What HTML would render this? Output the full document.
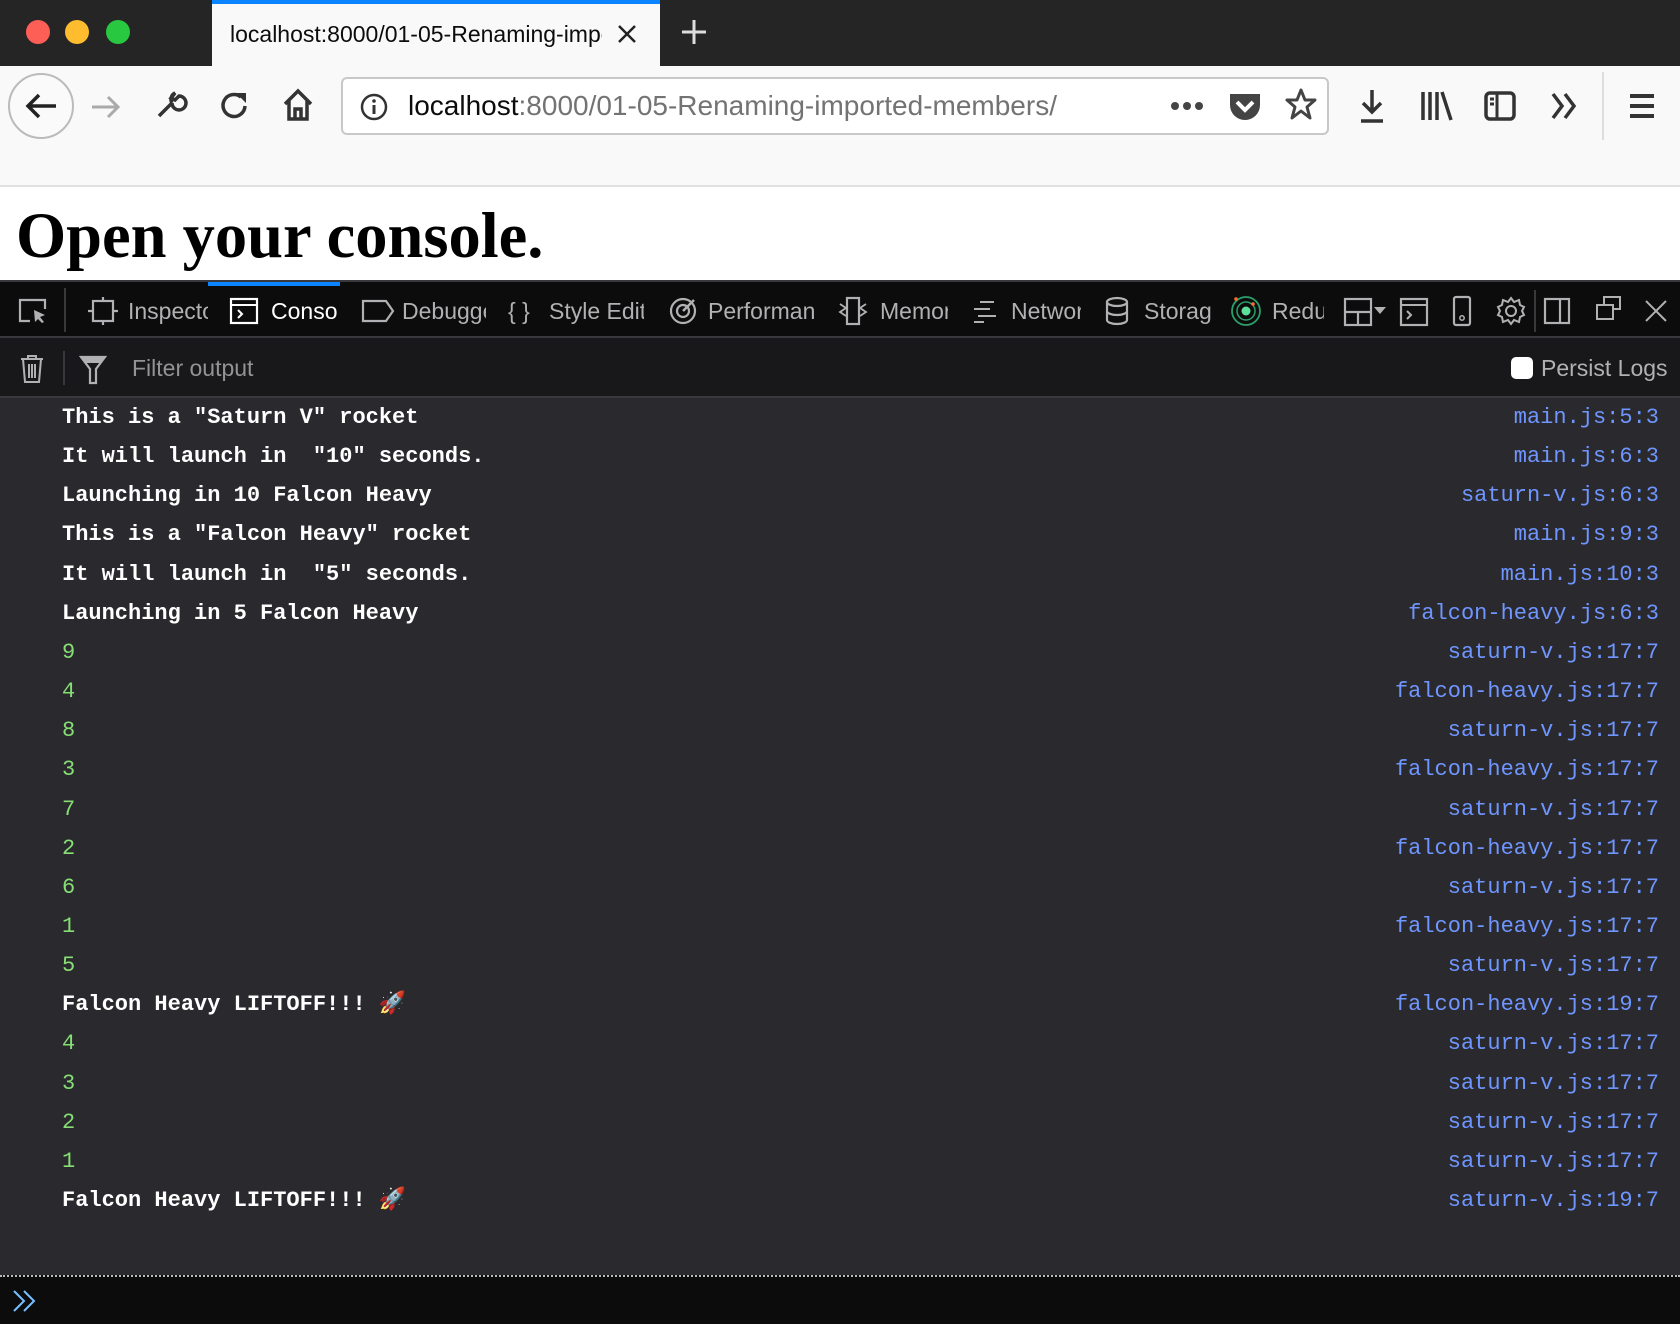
<!DOCTYPE html>
<html><head><meta charset="utf-8"><style>
*{margin:0;padding:0;box-sizing:border-box}
body{width:1680px;height:1324px;overflow:hidden;background:#fff;font-family:"Liberation Sans",sans-serif;position:relative}
.a{position:absolute}
.tabbar{left:0;top:0;width:1680px;height:66px;background:#252525}
.dot{width:24px;height:24px;border-radius:50%;top:20px}
.tab{left:212px;top:0;width:448px;height:66px;background:#f9f9f9;border-top:4px solid #0a84ff}
.toolbar{left:0;top:66px;width:1680px;height:121px;background:#f9f9f9;border-bottom:2px solid #e0e0e0}
.url{left:341px;top:77px;width:988px;height:58px;background:#fff;border:2px solid #c8c8c8;border-radius:6px}
.dt{left:0;top:280px;width:1680px;height:58px;background:#0c0c0d;border-top:2px solid #38383d;border-bottom:2px solid #38383d}
.tt{top:296px;font-size:23px;color:#b1b1b3;overflow:hidden;white-space:nowrap;height:30px;line-height:30px}
.fb{left:0;top:338px;width:1680px;height:60px;background:#18181a;border-bottom:2px solid #38383d}
.con{left:0;top:398px;width:1680px;height:877px;background:#2a2a2e}
.row{position:absolute;left:0;width:1680px;height:39px;line-height:39px;font-family:"Liberation Mono",monospace;font-size:22px;color:#fff}
.row .m{position:absolute;left:62px;white-space:pre;font-weight:bold}
.row .l{position:absolute;right:21px;color:#6f95ff}
.g{color:#86de74!important;font-weight:normal!important}
.inp{left:0;top:1275px;width:1680px;height:49px;background:#0c0c0d;border-top:2px dotted #bbb}
svg{position:absolute;overflow:visible}
</style></head><body>
<div class="a tabbar"></div>
<div class="a dot" style="left:26px;background:#fd5f57"></div>
<div class="a dot" style="left:65px;background:#febc2e"></div>
<div class="a dot" style="left:106px;background:#28c840"></div>
<div class="a tab"><div class="a" style="left:18px;top:17px;font-size:23px;color:#0c0c0d;white-space:nowrap;width:372px;overflow:hidden">localhost:8000/01-05-Renaming-imported</div></div>
<svg style="left:617px;top:24px" width="20" height="20"><path d="M2 2L18 18M18 2L2 18" stroke="#222" stroke-width="2.5"/></svg>
<svg style="left:680px;top:18px" width="28" height="28"><path d="M14 2V26M2 14H26" stroke="#ddd" stroke-width="3"/></svg>
<div class="a toolbar"></div>
<div class="a" style="left:8px;top:73px;width:66px;height:66px;border-radius:50%;border:2px solid #bbb;background:#fafafa"></div>
<svg style="left:24px;top:92px" width="34" height="28"><path d="M32 14H4M15 3L4 14L15 25" stroke="#222" stroke-width="3.5" fill="none"/></svg>
<svg style="left:90px;top:94px" width="32" height="26"><path d="M2 13H28M18 3L28 13L18 23" stroke="#aaa" stroke-width="3" fill="none"/></svg>
<svg style="left:155px;top:90px" width="30" height="30"><path d="M4 26L17 13M17 13A7 7 0 1 0 24 6L20 10L16 8L20 3A7 7 0 0 0 17 13" stroke="#333" stroke-width="3.5" fill="none"/></svg>
<svg style="left:219px;top:90px" width="32" height="32"><path d="M26 16A11 11 0 1 1 22 7" stroke="#333" stroke-width="3.5" fill="none"/><path d="M17 3H27V13Z" fill="#333"/></svg>
<svg style="left:282px;top:88px" width="32" height="34"><path d="M3 16L16 3L29 16M7 13V31H25V13M13 31V21H19V31" stroke="#333" stroke-width="3.5" fill="none"/></svg>
<div class="a url"></div>
<svg style="left:360px;top:93px" width="28" height="28"><circle cx="14" cy="14" r="12" stroke="#333" stroke-width="2.5" fill="none"/><path d="M14 12V21" stroke="#333" stroke-width="3"/><circle cx="14" cy="8" r="1.8" fill="#333"/></svg>
<div class="a" style="left:408px;top:90px;font-size:28px;color:#0c0c0d;white-space:nowrap">localhost<span style="color:#737373">:8000/01-05-Renaming-imported-members/</span></div>
<svg style="left:1170px;top:100px" width="36" height="12"><circle cx="5" cy="6" r="4" fill="#444"/><circle cx="17" cy="6" r="4" fill="#444"/><circle cx="29" cy="6" r="4" fill="#444"/></svg>
<svg style="left:1228px;top:91px" width="34" height="32"><path d="M2 3H32V14A15 15 0 0 1 2 14Z" fill="#444"/><path d="M9 11L17 19L25 11" stroke="#fff" stroke-width="4" fill="none"/></svg>
<svg style="left:1285px;top:88px" width="32" height="34"><path d="M16 2L20 12H30L22 19L25 30L16 23L7 30L10 19L2 12H12Z" stroke="#444" stroke-width="3" fill="none" stroke-linejoin="round"/></svg>
<svg style="left:1358px;top:88px" width="28" height="36"><path d="M14 2V24M5 15L14 24L23 15M3 33H25" stroke="#333" stroke-width="3.5" fill="none"/></svg>
<svg style="left:1420px;top:90px" width="34" height="32"><path d="M3 2V30M10 2V30M17 2V30M22 2L31 30" stroke="#333" stroke-width="3.5"/></svg>
<svg style="left:1484px;top:91px" width="32" height="30"><rect x="2" y="2" width="28" height="26" rx="4" stroke="#333" stroke-width="3.5" fill="none"/><path d="M13 2V28M6 8H10M6 13H10" stroke="#333" stroke-width="3"/></svg>
<svg style="left:1550px;top:92px" width="30" height="28"><path d="M3 2L12 14L3 26M15 2L24 14L15 26" stroke="#333" stroke-width="3.5" fill="none"/></svg>
<div class="a" style="left:1602px;top:72px;width:2px;height:68px;background:#ddd"></div>
<svg style="left:1628px;top:93px" width="28" height="26"><path d="M2 3H26M2 13H26M2 23H26" stroke="#333" stroke-width="4"/></svg>
<div class="a" style="left:16px;top:199px;font-family:'Liberation Serif',serif;font-weight:bold;font-size:64.5px;color:#000;white-space:nowrap">Open your console.</div>
<div class="a dt"></div>
<div class="a" style="left:208px;top:282px;width:132px;height:4px;background:#0a84ff"></div>
<svg style="left:18px;top:298px" width="30" height="26"><path d="M12 23H2V2H27V11" stroke="#b1b1b3" stroke-width="2.2" fill="none"/><path d="M16 12L27 17L22 19L26 24L24 25L20 21L17 24Z" fill="#b1b1b3"/></svg>
<div class="a" style="left:64px;top:288px;width:2px;height:44px;background:#38383d"></div>
<svg style="left:88px;top:297px" width="30" height="28"><rect x="5" y="4" width="20" height="20" stroke="#b1b1b3" stroke-width="2.2" fill="none"/><path d="M15 0V4M15 24V28M0 14H5M25 14H30" stroke="#b1b1b3" stroke-width="2.2"/></svg>
<div class="a tt" style="left:128px;width:80px">Inspector</div>
<svg style="left:230px;top:298px" width="28" height="26"><rect x="1" y="1" width="26" height="24" stroke="#fff" stroke-width="2.2" fill="none"/><path d="M1 7H27M8 12L12 16L8 20" stroke="#fff" stroke-width="2" fill="none"/></svg>
<div class="a tt" style="left:271px;width:68px;color:#fff">Console</div>
<svg style="left:362px;top:300px" width="32" height="22"><path d="M1 1H24L31 11L24 21H1Z" stroke="#b1b1b3" stroke-width="2.2" fill="none"/></svg>
<div class="a tt" style="left:402px;width:84px">Debugger</div>
<div class="a tt" style="left:508px;width:32px">{ }</div>
<div class="a tt" style="left:549px;width:95px">Style Editor</div>
<svg style="left:668px;top:296px" width="30" height="30"><circle cx="15" cy="15" r="12" stroke="#b1b1b3" stroke-width="2.2" fill="none"/><circle cx="15" cy="15" r="6" stroke="#b1b1b3" stroke-width="2.2" fill="none"/><path d="M15 15L26 4" stroke="#b1b1b3" stroke-width="2.5"/></svg>
<div class="a tt" style="left:708px;width:108px">Performance</div>
<svg style="left:838px;top:296px" width="30" height="30"><rect x="9" y="2" width="12" height="26" stroke="#b1b1b3" stroke-width="2.2" fill="none"/><path d="M2 8L8 12L2 16L8 20M28 8L22 12L28 16L22 20" stroke="#b1b1b3" stroke-width="1.8" fill="none"/></svg>
<div class="a tt" style="left:880px;width:68px">Memory</div>
<svg style="left:972px;top:300px" width="26" height="24"><path d="M8 2H22M2 9H18M6 16H24M2 22H12" stroke="#b1b1b3" stroke-width="2"/></svg>
<div class="a tt" style="left:1011px;width:70px">Network</div>
<svg style="left:1104px;top:296px" width="26" height="30"><ellipse cx="13" cy="6" rx="10" ry="4" stroke="#b1b1b3" stroke-width="2.2" fill="none"/><path d="M3 6V24A10 4 0 0 0 23 24V6M3 15A10 4 0 0 0 23 15" stroke="#b1b1b3" stroke-width="2.2" fill="none"/></svg>
<div class="a tt" style="left:1144px;width:68px">Storage</div>
<svg style="left:1230px;top:295px" width="32" height="32"><circle cx="16" cy="16" r="14" stroke="#2aa06a" stroke-width="1.8" fill="none"/><circle cx="16" cy="16" r="9" stroke="#2aa06a" stroke-width="1.5" fill="none"/><circle cx="16" cy="16" r="4.5" fill="#5ce09a"/><circle cx="6" cy="4" r="1.8" fill="#ff6a2a"/><circle cx="23" cy="9" r="1.8" fill="#ff6a2a"/></svg>
<div class="a tt" style="left:1272px;width:52px">Redux</div>
<svg style="left:1344px;top:298px" width="46" height="28"><rect x="1" y="1" width="26" height="26" stroke="#b1b1b3" stroke-width="2.2" fill="none"/><path d="M1 14H27M14 14V27" stroke="#b1b1b3" stroke-width="2.2"/><path d="M30 9H42L36 16Z" fill="#b1b1b3"/></svg>
<svg style="left:1400px;top:298px" width="28" height="28"><rect x="1" y="1" width="26" height="26" stroke="#b1b1b3" stroke-width="2.2" fill="none"/><path d="M1 7H27M7 13L11 17L7 21" stroke="#b1b1b3" stroke-width="2" fill="none"/></svg>
<svg style="left:1453px;top:296px" width="18" height="30"><rect x="1" y="1" width="16" height="28" rx="2" stroke="#b1b1b3" stroke-width="2.2" fill="none"/><circle cx="9" cy="22" r="2.2" stroke="#b1b1b3" stroke-width="1.5" fill="none"/></svg>
<svg style="left:1496px;top:296px" width="30" height="30"><circle cx="15" cy="15" r="5" stroke="#b1b1b3" stroke-width="2" fill="none"/><path d="M15 2L18 6L23 4L24 9L28 11L26 15L28 19L24 21L23 26L18 24L15 28L12 24L7 26L6 21L2 19L4 15L2 11L6 9L7 4L12 6Z" stroke="#b1b1b3" stroke-width="2" fill="none"/></svg>
<div class="a" style="left:1534px;top:290px;width:2px;height:42px;background:#38383d"></div>
<svg style="left:1544px;top:298px" width="26" height="26"><rect x="1" y="1" width="24" height="24" stroke="#b1b1b3" stroke-width="2.2" fill="none"/><path d="M16 1V25" stroke="#b1b1b3" stroke-width="2.2"/></svg>
<svg style="left:1596px;top:296px" width="26" height="26"><rect x="8" y="1" width="16" height="12" stroke="#b1b1b3" stroke-width="2" fill="none"/><rect x="1" y="9" width="16" height="14" stroke="#b1b1b3" stroke-width="2" fill="#0c0c0d"/></svg>
<svg style="left:1645px;top:300px" width="22" height="22"><path d="M1 1L21 21M21 1L1 21" stroke="#b1b1b3" stroke-width="2"/></svg>
<div class="a fb"></div>
<svg style="left:20px;top:355px" width="24" height="28"><path d="M1 4H23M8 4V1H16V4M3 4L5 27H19L21 4M9 9V23M12 9V23M15 9V23" stroke="#b1b1b3" stroke-width="2" fill="none"/></svg>
<div class="a" style="left:63px;top:351px;width:2px;height:34px;background:#38383d"></div>
<svg style="left:80px;top:356px" width="26" height="28"><path d="M1 1H25L16 13V27H10V13Z" stroke="#b1b1b3" stroke-width="2.2" fill="none"/><path d="M2 2H24L20 7H6Z" fill="#b1b1b3"/></svg>
<div class="a" style="left:132px;top:355px;font-size:23px;color:#939395">Filter output</div>
<div class="a" style="left:1511px;top:357px;width:22px;height:22px;background:#fff;border-radius:5px"></div>
<div class="a" style="left:1541px;top:355px;font-size:23px;color:#b1b1b3">Persist Logs</div>
<div class="a con">
<div class="row" style="top:0px"><span class="m">This is a "Saturn V" rocket</span><span class="l">main.js:5:3</span></div>
<div class="row" style="top:39.15px"><span class="m">It will launch in  "10" seconds.</span><span class="l">main.js:6:3</span></div>
<div class="row" style="top:78.3px"><span class="m">Launching in 10 Falcon Heavy</span><span class="l">saturn-v.js:6:3</span></div>
<div class="row" style="top:117.45px"><span class="m">This is a "Falcon Heavy" rocket</span><span class="l">main.js:9:3</span></div>
<div class="row" style="top:156.6px"><span class="m">It will launch in  "5" seconds.</span><span class="l">main.js:10:3</span></div>
<div class="row" style="top:195.75px"><span class="m">Launching in 5 Falcon Heavy</span><span class="l">falcon-heavy.js:6:3</span></div>
<div class="row" style="top:234.9px"><span class="m g">9</span><span class="l">saturn-v.js:17:7</span></div>
<div class="row" style="top:274.05px"><span class="m g">4</span><span class="l">falcon-heavy.js:17:7</span></div>
<div class="row" style="top:313.2px"><span class="m g">8</span><span class="l">saturn-v.js:17:7</span></div>
<div class="row" style="top:352.35px"><span class="m g">3</span><span class="l">falcon-heavy.js:17:7</span></div>
<div class="row" style="top:391.5px"><span class="m g">7</span><span class="l">saturn-v.js:17:7</span></div>
<div class="row" style="top:430.65px"><span class="m g">2</span><span class="l">falcon-heavy.js:17:7</span></div>
<div class="row" style="top:469.8px"><span class="m g">6</span><span class="l">saturn-v.js:17:7</span></div>
<div class="row" style="top:508.95px"><span class="m g">1</span><span class="l">falcon-heavy.js:17:7</span></div>
<div class="row" style="top:548.1px"><span class="m g">5</span><span class="l">saturn-v.js:17:7</span></div>
<div class="row" style="top:587.25px"><span class="m">Falcon Heavy LIFTOFF!!! 🚀</span><span class="l">falcon-heavy.js:19:7</span></div>
<div class="row" style="top:626.4px"><span class="m g">4</span><span class="l">saturn-v.js:17:7</span></div>
<div class="row" style="top:665.55px"><span class="m g">3</span><span class="l">saturn-v.js:17:7</span></div>
<div class="row" style="top:704.7px"><span class="m g">2</span><span class="l">saturn-v.js:17:7</span></div>
<div class="row" style="top:743.85px"><span class="m g">1</span><span class="l">saturn-v.js:17:7</span></div>
<div class="row" style="top:783px"><span class="m">Falcon Heavy LIFTOFF!!! 🚀</span><span class="l">saturn-v.js:19:7</span></div>
</div>
<div class="a inp"></div>
<svg style="left:12px;top:1289px" width="26" height="24"><path d="M2 2L12 12L2 22M12 2L22 12L12 22" stroke="#75bfff" stroke-width="2" fill="none"/></svg>
</body></html>
